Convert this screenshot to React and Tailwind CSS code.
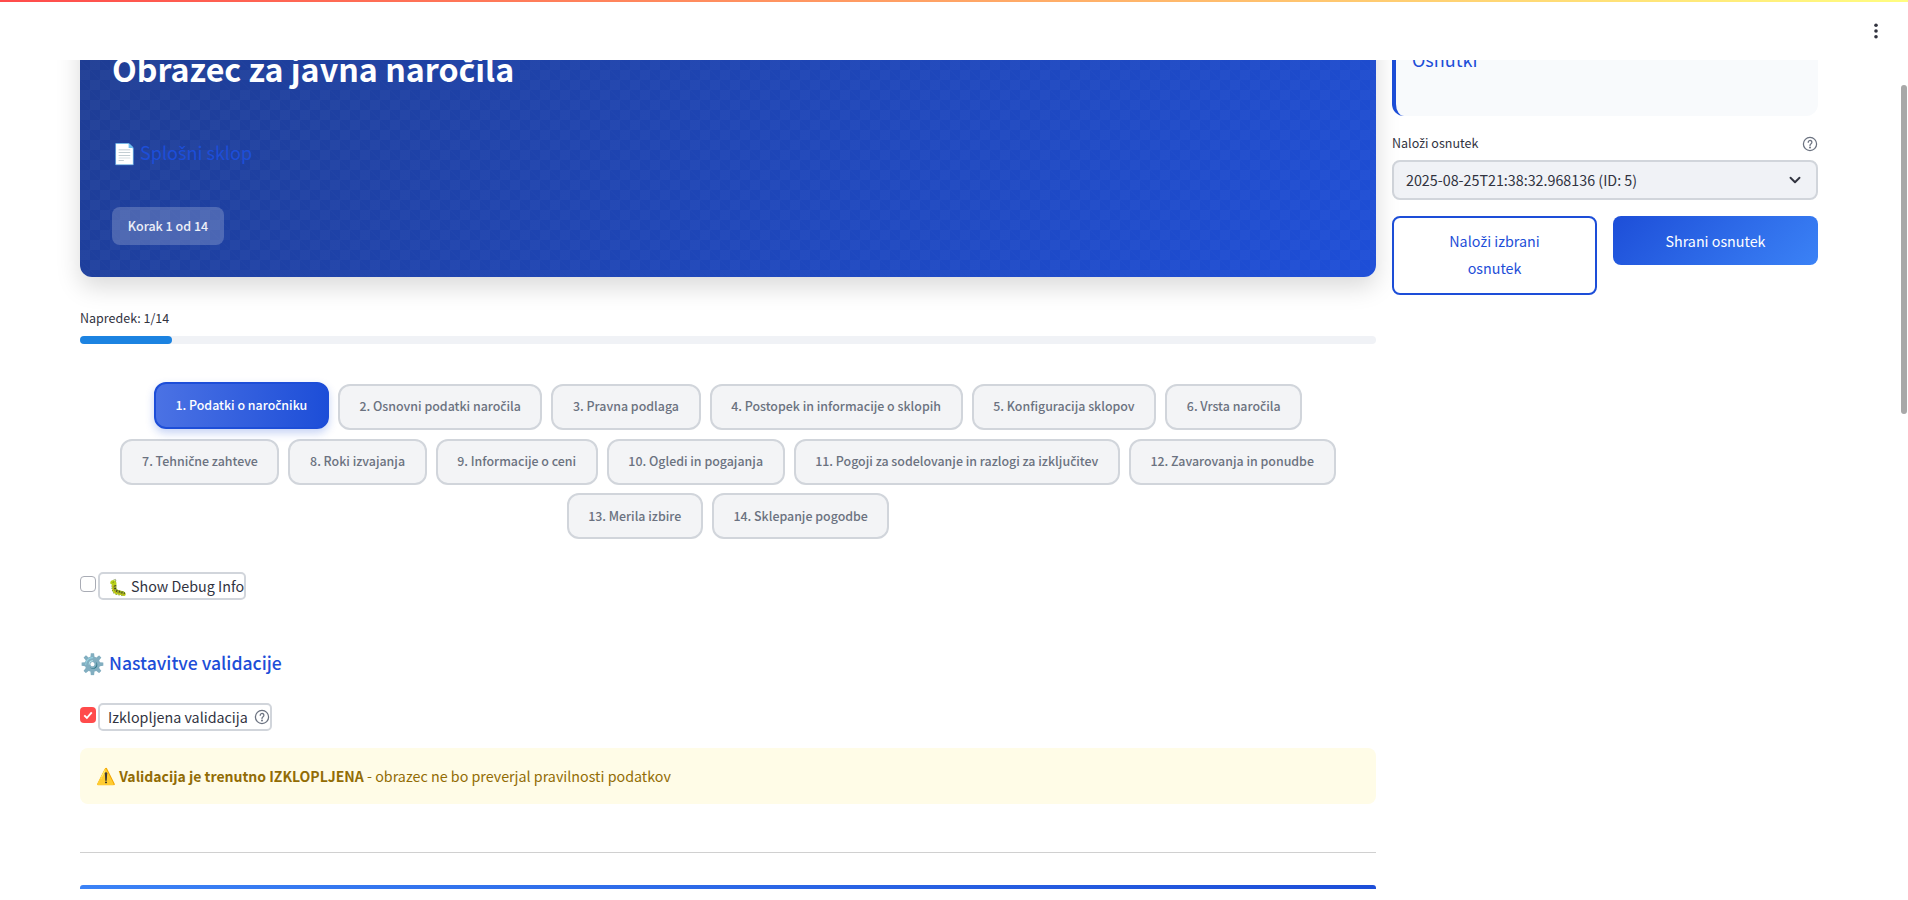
import React from "react";
import { ChevronDown } from "lucide-react";

const font = "font-['Noto_Sans_CJK_SC',sans-serif]";

// č, š and ž are missing from the Latin subset of the CJK family, so they take a sibling sans.
function T({ children }) {
  return String(children)
    .split(/([čšž])/)
    .map((part, i) =>
      /^[čšž]$/.test(part) ? (
        <span key={i} className="font-['Noto_Sans',sans-serif]">{part}</span>
      ) : (
        part
      )
    );
}

function Help({ className = "" }) {
  return (
    <svg viewBox="0 0 16 16" className={className} fill="none" stroke="#6b7280" strokeWidth="1.25" strokeLinecap="round">
      <circle cx="8" cy="8" r="6.6" />
      <path d="M6.2 6.3a1.85 1.85 0 1 1 2.9 1.5c-.7.5-1.1.8-1.1 1.6" />
      <circle cx="8" cy="11.4" r=".4" fill="#6b7280" />
    </svg>
  );
}

const steps = [
  ["1. Podatki o naročniku", "2. Osnovni podatki naročila", "3. Pravna podlaga", "4. Postopek in informacije o sklopih", "5. Konfiguracija sklopov", "6. Vrsta naročila"],
  ["7. Tehnične zahteve", "8. Roki izvajanja", "9. Informacije o ceni", "10. Ogledi in pogajanja", "11. Pogoji za sodelovanje in razlogi za izključitev", "12. Zavarovanja in ponudbe"],
  ["13. Merila izbire", "14. Sklepanje pogodbe"],
];

export default function App() {
  return (
    <div className={`${font} relative h-[900px] overflow-hidden bg-white text-[#31333f]`}>
      <div className="h-[2px] bg-[linear-gradient(90deg,#ff4b4b,#fffd80)]" />
      <header className="h-[58px] flex justify-end items-center pr-[29px]">
        <svg viewBox="0 0 6 18" className="w-[6px] h-[18px] -mt-[1px]" fill="#31333f">
          <circle cx="3" cy="3.2" r="1.8" /><circle cx="3" cy="9" r="1.8" /><circle cx="3" cy="14.8" r="1.8" />
        </svg>
      </header>

      <div className="h-[840px] overflow-hidden flex gap-4 pl-20 pr-[90px]">
        <main className="w-[1296px] shrink-0 -mt-[40px]">
          <section className="relative h-[257px] rounded-xl px-8 pt-[26px] shadow-[0_10px_25px_rgba(0,0,0,0.15)] bg-[linear-gradient(135deg,#1e3c92,#1d4ed8)]">
            <div className="absolute inset-0 rounded-xl bg-[linear-gradient(45deg,transparent_49%,rgba(255,255,255,0.02)_50%,transparent_51%),repeating-conic-gradient(rgba(255,255,255,0.03)_0_25%,transparent_0_50%)] bg-[length:20px_20px]" />
            <div className="relative">
              <h1 className="text-[32.2px] leading-[44px] font-bold text-white"><T>Obrazec za javna naročila</T></h1>
              <div className="mt-[46px] flex items-center gap-[3px] text-[18px] leading-[28px] text-[#1d4ed8]">
                <span className="text-[20px]">📄</span>
                <span><T>Splošni sklop</T></span>
              </div>
              <div className="mt-[40px] w-[112px] h-[38px] flex items-center justify-center rounded-lg bg-white/20 text-[12.5px] font-medium text-white/90">Korak 1 od 14</div>
            </div>
          </section>

          <div className="mt-[31px] text-[12.5px] leading-5 text-[#31333f]">Napredek: 1/14</div>
          <div className="mt-[8px] h-2 rounded-full bg-[#f0f2f6]"><div className="h-2 w-[92px] rounded-full bg-[#1c83e1]" /></div>

          <div className="mt-[39px] flex flex-col items-center gap-[8.5px]">
            {steps.map((row, i) => (
              <div key={i} className="flex justify-center items-center gap-[9px]">
                {row.map((s) =>
                  s.startsWith("1. ") ? (
                    <button key={s} className="h-[47px] px-[19.6px] whitespace-nowrap rounded-xl border-2 border-[#1d4ed8] bg-[linear-gradient(90deg,#4b72e4,#1d4ed8)] text-white text-[12.4px] font-medium shadow-[0_4px_8px_rgba(29,78,216,0.25)] -translate-y-[1px]"><T>{s}</T></button>
                  ) : (
                    <button key={s} className="h-[46px] px-[19.6px] whitespace-nowrap rounded-xl border-2 border-[#d1d5db] bg-[#f3f4f6] text-[#6b7280] text-[12.4px] font-medium"><T>{s}</T></button>
                  )
                )}
              </div>
            ))}
          </div>

          <div className="mt-[33px] flex items-start gap-[2px] h-[28px]">
            <span className="mt-[4px] w-4 h-4 rounded border border-[#a9acb5] bg-white" />
            <span className="h-[28px] flex items-center gap-[3px] pl-[8px] pr-0 rounded-[5px] border-2 border-[#d1d5db] text-[14.3px]"><span className="text-[16px]">🐛</span> Show Debug Info</span>
          </div>

          <h2 className="mt-[49px] flex items-center gap-[4px] text-[17.6px] leading-[28px] font-medium text-[#1d4ed8]"><span className="text-[20px]">⚙️</span> Nastavitve validacije</h2>

          <div className="mt-[26px] flex items-start gap-[2px] h-[28px]">
            <span className="mt-[4px] w-4 h-4 rounded bg-[#ff4b4b] flex items-center justify-center">
              <svg viewBox="0 0 16 16" className="w-3 h-3" fill="none" stroke="#fff" strokeWidth="2.5"><path d="M3 8.5l3.5 3.5L13 4.5" /></svg>
            </span>
            <span className="h-[28px] flex items-center gap-[6px] pl-[8px] pr-0 rounded-[5px] border-2 border-[#d1d5db] text-[14.3px]">Izklopljena validacija <Help className="w-4 h-4" /></span>
          </div>

          <div className="mt-[17px] h-[56px] pb-[3px] rounded-lg bg-[#fffce7] flex items-center px-4 text-[14.3px] text-[#926c05]">
            <span><span className="text-[16px]">⚠️</span> <b className="font-bold text-[14px]">Validacija je trenutno IZKLOPLJENA</b> - obrazec ne bo preverjal pravilnosti podatkov</span>
          </div>

          <hr className="mt-[48px] border-0 h-px bg-[#d0d0d0]" />

          <div className="mt-[32px] h-1 rounded-t-[3px] bg-[linear-gradient(90deg,#3b82f6,#1d4ed8)]" />
        </main>

        <aside className="w-[426px] shrink-0 -mt-[40px]">
          <div className="h-[96px] rounded-xl border-l-4 border-[#1d4ed8] bg-[#f8fafc] pl-[16px] pt-[25px] text-[18px] leading-[28px] text-[#1d4ed8]">Osnutki</div>
          <div className="mt-[17px] flex items-center justify-between h-[22px] text-[12.5px]"><span><T>Naloži osnutek</T></span><Help className="w-4 h-4" /></div>
          <div className="mt-[5px] h-[40px] rounded-lg border-2 border-[#d1d5db] bg-[#f0f2f6] flex items-center justify-between px-[12px] text-[14.3px]">
            <span>2025-08-25T21:38:32.968136 (ID: 5)</span>
            <ChevronDown className="w-[18px] h-[18px]" strokeWidth={2.5} />
          </div>
          <div className="mt-[16px] grid grid-cols-2 gap-4 items-start">
            <button className="h-[79px] pb-[2px] rounded-lg border-2 border-[#1d4ed8] bg-white text-[#1d4ed8] text-[14.3px] leading-[26px] px-[20px]"><T>Naloži izbrani</T><br />osnutek</button>
            <button className="h-[49px] rounded-lg bg-[linear-gradient(135deg,#1d4ed8,#3b82f6)] text-white text-[14.3px]">Shrani osnutek</button>
          </div>
        </aside>
      </div>

      <div className="absolute right-[1px] top-[85px] w-[6px] h-[329px] rounded-full bg-[#a8a8a8]" />
    </div>
  );
}
